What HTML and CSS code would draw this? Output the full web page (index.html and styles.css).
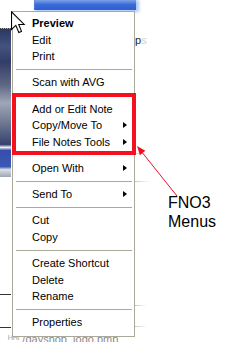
FILE: index.html
```html
<!DOCTYPE html>
<html>
<head>
<meta charset="utf-8">
<link rel="stylesheet" href="styles.css">
</head>
<body>
<div class="stage">
  <div class="bg-bar"></div>
  <div class="bg-strip"></div>
  <div class="bg-ps"><span class="ps-p">p</span><span class="ps-s">s</span></div>
  <div class="bg-line r1"></div>
  <div class="bg-line r2"></div>
  <div class="bg-line r3"></div>
  <div class="bg-line r4"></div>
  <div class="bg-dark d1"></div>
  <div class="bg-dark d2"></div>
  <div class="bg-file"><span class="file-icon">ᴴᴴᴵ</span> /dayshop_logo.bmp</div>

  <div class="menu">
    <div class="item bold">Preview</div>
    <div class="item">Edit</div>
    <div class="item">Print</div>
    <div class="sep"></div>
    <div class="item">Scan with AVG</div>
    <div class="sep"></div>
    <div class="item">Add or Edit Note</div>
    <div class="item sub">Copy/Move To</div>
    <div class="item sub">File Notes Tools</div>
    <div class="sep"></div>
    <div class="item sub">Open With</div>
    <div class="sep"></div>
    <div class="item sub">Send To</div>
    <div class="sep"></div>
    <div class="item">Cut</div>
    <div class="item">Copy</div>
    <div class="sep"></div>
    <div class="item">Create Shortcut</div>
    <div class="item">Delete</div>
    <div class="item">Rename</div>
    <div class="sep"></div>
    <div class="item">Properties</div>
  </div>

  <div class="highlight"></div>
  <svg class="callout" width="60" height="60" viewBox="0 0 60 60">
    <line x1="11" y1="11" x2="47" y2="56" stroke="#ee1020" stroke-width="1"/>
    <polygon points="7,6 9.9,15.2 15.3,10.8" fill="#ee1020"/>
  </svg>
  <div class="label">FNO3<br>Menus</div>
  <svg class="cursor" width="15" height="23" viewBox="0 0 14 21">
    <path d="M0.5 0.5 L0.5 17 L4.5 13.2 L7.3 19.8 L9.8 18.8 L7.2 12.3 L12.3 12.3 Z" fill="#fff" stroke="#000" stroke-width="1" stroke-linejoin="miter"/>
  </svg>
</div>
</body>
</html>
```

FILE: styles.css
```css
html, body {
  margin: 0;
  padding: 0;
  background: #fff;
}

.stage {
  position: relative;
  width: 250px;
  height: 342px;
  overflow: hidden;
  background: #fff;
  padding: 11px 0 0 12px;
  box-sizing: border-box;
  font-family: "Liberation Sans", Arial, sans-serif;
}

/* background desktop pieces */
.bg-bar {
  position: absolute;
  left: 34px;
  top: 0;
  width: 101px;
  height: 10px;
  background: linear-gradient(#7ea3ea, #3a6bd8 45%, #2c5fd2);
  border-left: 1px dotted #7a8aa8;
  box-shadow: 2px 1px 3px 1px rgba(80, 130, 225, 0.45);
}

.bg-strip {
  position: absolute;
  left: 0;
  top: 28px;
  width: 11px;
  height: 148px;
  border-top: 1px dotted #333;
  background: linear-gradient(#1f2c5e 0%, #3a4a78 12%, #27335f 22%, #56607e 38%, #9ca2b2 50%, #6e7690 62%, #2c3866 78%, #eef0f4 80%, #2a46a8 82%, #3050b0 93%, #d8dce4 95%, #9aa0b0 100%);
  opacity: 0.95;
}

.bg-ps {
  position: absolute;
  left: 135px;
  top: 34px;
  font-size: 11px;
  line-height: 13px;
}
.ps-p { color: #222; }
.ps-s { color: #cfcfcf; }

.bg-line {
  position: absolute;
  left: 135px;
  width: 12px;
  height: 1px;
  background: linear-gradient(90deg, #c8c8c8, rgba(255,255,255,0));
}
.r1 { top: 153px; }
.r2 { top: 181px; width: 16px; }
.r3 { top: 305px; }
.r4 { top: 326px; }

.bg-dark {
  position: absolute;
  left: 0;
  width: 11px;
  height: 1px;
  background: #333;
}
.d1 { top: 294px; }
.d2 { top: 327px; }

.bg-file {
  position: absolute;
  left: 8px;
  top: 333px;
  font-size: 11px;
  line-height: 13px;
  color: #8a8a8a;
  white-space: nowrap;
}
.file-icon { color: #a8b0a8; }

/* context menu */
.menu {
  position: relative;
  z-index: 2;
  width: 123px;
  box-sizing: border-box;
  background: #fff;
  border: 1px solid #aca899;
  padding: 3px 0 5px 0;
  font-family: "Liberation Sans", Arial, sans-serif;
  font-size: 11px;
  color: #000;
}

.item {
  height: 16.5px;
  line-height: 16.5px;
  padding: 0 7px 0 19px;
  display: flex;
  justify-content: space-between;
  align-items: center;
  white-space: nowrap;
}

.item.bold { font-weight: bold; }

.item.sub::after {
  content: "";
  width: 0;
  height: 0;
  border-left: 4px solid #000;
  border-top: 3.5px solid transparent;
  border-bottom: 3.5px solid transparent;
}

.sep {
  height: 9.75px;
  box-sizing: border-box;
  padding: 4.25px 2px 0 3px;
}
.sep::before {
  content: "";
  display: block;
  height: 1px;
  background: #aca899;
}

/* annotation overlays */
.highlight {
  position: absolute;
  z-index: 3;
  left: 12px;
  top: 93px;
  width: 124px;
  height: 62px;
  box-sizing: border-box;
  border: 4px solid #f5101e;
}

.callout {
  position: absolute;
  z-index: 3;
  left: 130px;
  top: 140px;
}

.label {
  position: absolute;
  z-index: 3;
  left: 168px;
  top: 193px;
  font-family: "Liberation Sans", Arial, sans-serif;
  font-size: 16px;
  line-height: 19px;
  color: #000;
}

.cursor {
  position: absolute;
  z-index: 4;
  left: 11px;
  top: 11px;
}
```
